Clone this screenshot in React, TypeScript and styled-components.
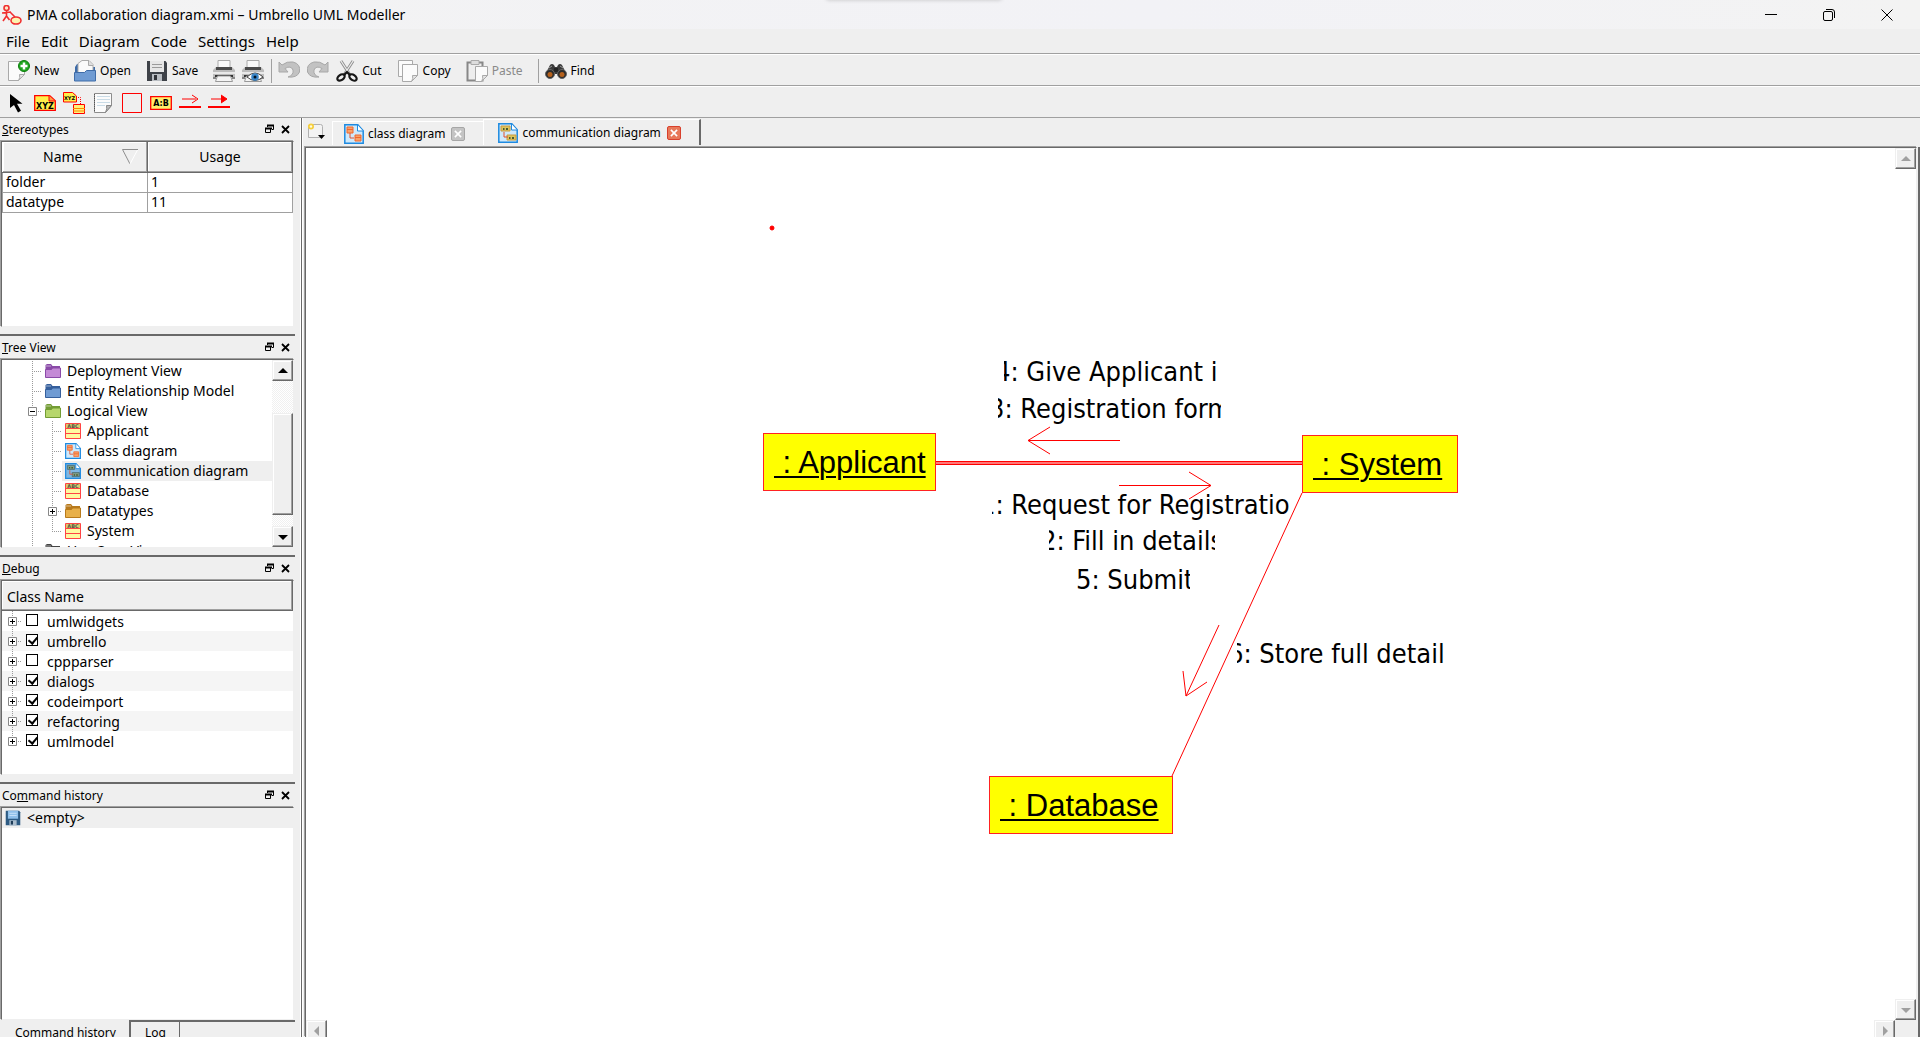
import React from 'react';
import styled, { createGlobalStyle } from 'styled-components';

const ui = '"Noto Sans", "Open Sans", sans-serif';
const diagramFont = '"DejaVu Sans Condensed", "Noto Sans", sans-serif';
const face = '#efefef';
const mid = '#a0a0a0';
const dark = '#696969';

const Global = createGlobalStyle`
  * { box-sizing: border-box; }
  html, body, #root { height: 100%; }
  body { margin: 0; background: ${face}; color: #000; font-family: ${ui}; font-size: 14px; overflow: hidden; }
  button { font: inherit; color: inherit; background: none; border: 0; padding: 0; margin: 0; }
  svg { display: block; flex: none; }
`;

const Window = styled.div`display: flex; flex-direction: column; height: 100%; background: ${face};`;

const TitleBar = styled.header`
  position: relative; display: flex; align-items: center; height: 29px; flex: none;
  padding: 0 4px 0 2px; background: linear-gradient(90deg, #f3f3f3, #f2f2f6 60%, #f3f3f3);
`;
const ShareBar = styled.div`
  position: absolute; top: -6px; left: 43%; width: 176px; height: 6px; border-radius: 4px;
  background: #fff; box-shadow: 0 0 4px #0003;
`;
const Title = styled.h1`flex: 1; margin: 0 0 0 5px; font-size: 14px; line-height: 20px; font-weight: 400;`;
const WindowButton = styled.button`
  width: 58px; height: 29px; display: flex; align-items: center; justify-content: center;
`;

const MenuBar = styled.nav`
  display: flex; align-items: center; height: 25px; flex: none; padding: 0 6px; gap: 11px;
  border-bottom: 1px solid ${mid};
`;
const MenuItem = styled.button`font-size: 15px; line-height: 22px;`;

const ToolBar = styled.div<{ $icons?: boolean }>`
  display: flex; align-items: center; height: 32px; flex: none; padding: 1px ${p => (p.$icons ? 5 : 8)}px 0;
  gap: ${p => (p.$icons ? 7 : 5)}px; border-top: 1px solid #fff; border-bottom: 1px solid ${mid};
`;
const ToolButton = styled.button<{ $wide?: boolean; $off?: boolean }>`
  display: flex; align-items: center; gap: 4px; height: 24px;
  margin-right: ${p => (p.$wide ? 10 : 2)}px;
  font-size: 12px; color: ${p => (p.$off ? '#8a8a8a' : '#000')};
`;
const ToolIcon = styled.button`width: 22px; height: 24px; display: flex; align-items: center; justify-content: center;`;
const Rule = styled.span`width: 1px; height: 24px; background: ${mid}; margin-right: 1px;`;

const Body = styled.div`display: flex; flex: 1; min-height: 0;`;
const Sidebar = styled.aside`width: 295px; flex: none; display: flex; flex-direction: column; min-height: 0;`;
const Splitter = styled.div`
  width: 9px; flex: none;
  background: linear-gradient(90deg, ${face} 5px, #fff 5px 6px, ${dark} 6px 7px, #fff 7px 8px, ${face} 8px);
`;

const Dock = styled.section<{ $h?: number }>`
  display: flex; flex-direction: column; flex: ${p => (p.$h ? `0 0 ${p.$h}px` : '1 1 0')}; min-height: 0;
`;
const DockTitle = styled.header`
  display: flex; align-items: center; gap: 6px; height: 22px; flex: none; padding: 0 4px 0 2px;
  h2 { flex: 1; margin: 0; font-size: 12px; line-height: 20px; font-weight: 400; padding-top: 1px; }
`;
const DockButton = styled.button`width: 10px; height: 12px;`;
const Frame = styled.div`
  flex: 1; min-height: 0; margin: 1px 1px 0; background: #fff; overflow: hidden; display: flex;
  border: 1px solid; border-color: ${dark} ${face} ${face} ${dark}; box-shadow: -1px -1px ${mid};
`;
const DockEdge = styled.div`
  height: 9px; flex: none; border-bottom: 2px solid ${dark};
`;

const Grid = styled.table`
  width: 100%; border-collapse: collapse; table-layout: fixed; align-self: flex-start; font-size: 14px;
  th { height: 30px; background: ${face}; font-weight: 400; padding: 0; border-right: 1px solid ${dark}; border-bottom: 1px solid ${dark}; box-shadow: inset -1px -1px ${mid}, inset 1px 1px #fff; }
  td { height: 20px; line-height: 18px; padding: 0 3px; border: 1px solid ${mid}; border-top: 0; }
`;
const SortHead = styled.span`display: flex; justify-content: center; gap: 40px; padding-left: 32px; align-items: center;`;

const TreeArea = styled.ul<{ $pad?: boolean }>`
  flex: 1; min-width: 0; margin: 0; padding: ${p => (p.$pad ? 1 : 0)}px 0 0; list-style: none; overflow: hidden;
`;
const TreeRow = styled.li<{ $shade?: string }>`
  display: flex; align-items: center; height: 20px; font-size: 14px; line-height: 20px; white-space: nowrap;
  background: ${p => p.$shade || 'transparent'};
`;
const TreeItem = styled.span<{ $on?: boolean }>`
  display: flex; align-items: center; flex: 1; gap: 6px; height: 20px; padding-left: 3px;
  background: ${p => (p.$on ? face : 'transparent')};
`;
const Indent = styled.span<{ $w: number }>`width: ${p => p.$w}px; flex: none;`;
const Check = styled.label`display: flex; align-items: center; gap: 9px; padding-left: 4px;`;
const CheckText = styled.span`padding-top: 2px;`;
const Box = styled.input`
  appearance: none; width: 12px; height: 12px; margin: 0 0 2px; border: 1px solid #000; background: #fff; position: relative;
  &:checked::after { content: ''; position: absolute; left: 3px; top: 0; width: 4px; height: 7px; border: solid #000; border-width: 0 2px 2px 0; transform: rotate(40deg); }
`;
const ListHead = styled.div`
  height: 30px; padding: 0 5px; line-height: 31px; background: ${face}; border-right: 1px solid ${dark}; border-bottom: 1px solid ${dark};
  box-shadow: inset -1px -1px ${mid}, inset 1px 1px #fff;
`;
const Column = styled.div`flex: 1; min-width: 0; display: flex; flex-direction: column;`;

const ScrollTrack = styled.div`
  width: 21px; flex: none; display: flex; flex-direction: column; align-items: stretch;
  background: repeating-conic-gradient(#fff 0 25%, #f0f0f0 0 50%) 0 0 / 2px 2px;
`;
const ScrollButton = styled.button`
  width: 21px; height: 21px; flex: none; display: flex; align-items: center; justify-content: center; background: ${face};
  border: solid; border-width: 1px; border-color: ${face} ${dark} ${dark} ${face};
  box-shadow: inset -1px -1px ${mid}, inset 1px 1px #fff;
`;
const Thumb = styled.div`
  height: 102px; background: ${face}; border: solid 1px; border-color: ${face} ${dark} ${dark} ${face};
  box-shadow: inset -1px -1px ${mid}, inset 1px 1px #fff;
`;
const Space = styled.div<{ $grow?: number }>`flex: ${p => p.$grow ?? 1};`;

const BottomTabs = styled.div`
  display: flex; height: 17px; flex: none; overflow: hidden; font-size: 12px; align-items: flex-start;
`;
const BottomTab = styled.button<{ $on?: boolean }>`
  height: 26px; flex: none; padding: ${p => (p.$on ? '3px 13px 0 15px' : '1px 13px 0 14px')}; line-height: 20px;
  display: flex; align-items: flex-start;
  border: solid; border-color: ${dark}; border-width: ${p => (p.$on ? '0' : '2px 1px 0 2px')};
`;
const BottomRest = styled.div`flex: 1; border-top: 2px solid ${dark};`;

const Main = styled.main`flex: 1; min-width: 0; display: flex; flex-direction: column;`;
const TabBar = styled.div`
  display: flex; align-items: flex-end; height: 27px; flex: none; padding-left: 3px; font-size: 12px;
`;
const NewTab = styled.button`width: 25px; height: 24px;`;
const Tab = styled.div<{ $on?: boolean }>`
  display: flex; align-items: center; gap: 4px; height: ${p => (p.$on ? 26 : 24)}px;
  padding: 0 18px 0 ${p => (p.$on ? 14 : 11)}px;
  border: solid #fff; border-width: 1px 0 0 1px;
  border-right: ${p => (p.$on ? `2px solid ${dark}` : '0')};
`;
const TabLabel = styled.button`display: flex; align-items: center; gap: 4px; white-space: nowrap;`;
const CloseTab = styled.button<{ $on?: boolean }>`
  width: 14px; height: 14px; margin-left: 2px; border-radius: 2px; display: flex; align-items: center; justify-content: center;
  background: ${p => (p.$on ? '#e8795a' : '#c4c4c4')}; border: 1px solid ${p => (p.$on ? '#d8402c' : '#a6a6a6')};
`;
const CanvasFrame = styled.div`
  flex: 1; min-height: 0; display: flex; margin: 2px 3px 0 1px; background: #fff;
  border: solid; border-width: 1px 1px 0; border-color: ${dark} ${face} ${face} ${dark};
  box-shadow: -1px -1px ${mid}, 1px 0 ${face}, 3px 0 ${dark};
`;
const View = styled.div`flex: 1; min-width: 0; display: flex; flex-direction: column;`;
const Canvas = styled.div`position: relative; flex: 1; overflow: hidden; min-height: 0;`;
const HScroll = styled.div`display: flex; justify-content: space-between; height: 17px; flex: none; overflow: hidden;`;
const VScroll = styled.div`display: flex; flex-direction: column; justify-content: space-between; width: 21px; flex: none;`;
const Corner = styled.div`height: 17px; background: ${face};`;
const Lines = styled.svg`position: absolute; left: 0; top: 0;`;
const Node = styled.div<{ $x: number; $y: number; $w: number }>`
  position: absolute; left: ${p => p.$x}px; top: ${p => p.$y}px; width: ${p => p.$w}px; height: 58px;
  padding: 11px 10px 0; background: #ff0; border: 1px solid #f22;
  font-family: "Liberation Sans", Arial, sans-serif; font-size: 31px; line-height: 36px; white-space: pre;
  text-decoration: underline; text-decoration-thickness: 2px; text-underline-offset: 3px;
`;
const Message = styled.div<{ $x: number; $y: number; $w: number; $shift: number }>`
  position: absolute; left: ${p => p.$x}px; top: ${p => p.$y}px; width: ${p => p.$w}px; height: 36px; overflow: hidden;
  font-family: ${diagramFont}; font-size: 27px; line-height: 36px; white-space: nowrap; text-indent: ${p => p.$shift}px;
`;

/* ---------- icons ---------- */
const Sheet = ({ x = 1, y = 2, w = 17, h = 19 }: { x?: number; y?: number; w?: number; h?: number }) => (
  <g stroke="#a9a9a9" fill="#fbfbfb">
    <path d={`M${x + .5} ${y + .5}h${w}v${h - 6}l-6 6h${6 - w}z`} />
    <path d={`M${x + w + .5} ${y + h - 5.5}h-5q1 3-1 6z`} fill="#e4e4e4" />
  </g>
);
const NewIcon = () => (
  <svg width="22" height="22" viewBox="0 0 22 22"><Sheet x={0} y={1} w={16} />
    <circle cx="16" cy="6" r="5.500" fill="#1ea51e" stroke="#0b7d0b" /><path d="M16 2.500v7M12.500 6h7" stroke="#fff" strokeWidth="2.500" /></svg>
);
const OpenIcon = () => (
  <svg width="22" height="22" viewBox="0 0 22 22">
    <path d="M1 20V7l2-3h5l2 3h11v13z" fill="#3c6ba8" /><path d="M4 13V3.500L8 .5h7l4 4V13z" fill="#fafafa" stroke="#aaa" /><path d="M14.500 1v4.500H19" fill="#ddd" stroke="#aaa" />
    <path d="M.5 12.500h10l2-2h9v10.500H.5z" fill="#6f9bd3" stroke="#3f6ca8" /></svg>
);
const SaveIcon = ({ size = 22, blue }: { size?: number; blue?: boolean }) => (
  <svg width={size} height={size} viewBox="0 0 22 22">
    <path d="M1 1h18.500l1.500 2v18H1z" fill={blue ? '#2d5b83' : '#3e4248'} />
    <path d="M4 1h14v11H4z" fill={blue ? '#8fc0ea' : '#e6e6e6'} /><path d="M6 4.500h10M6 7.500h10" stroke={blue ? '#dceeff' : '#9a9a9a'} />
    <path d="M6 14h10v7H6z" fill={blue ? '#a9bccd' : '#b9bdc2'} /><path d="M8 15h3v5H8z" fill={blue ? '#1d3c58' : '#303338'} /></svg>
);
const PrintIcon = ({ eye }: { eye?: boolean }) => (
  <svg width="22" height="22" viewBox="0 0 22 22">
    <path d="M5 .5h12V8H5z" fill="#fafafa" stroke="#aaa" /><path d="M3 7h16l3 3v7H0v-7z" fill="#bcbcbc" /><path d="M3 7h16v3H3z" fill="#4c4c4c" />
    <path d="M0 12h22v2H0z" fill="#e9e9e9" /><path d="M2 15h18v2H2z" fill="#333" /><path d="M4.500 16h13l2 5.500h-17z" fill="#f4f4f4" stroke="#999" /><path d="M0 17h3v2H0zM19 17h3v2h-3z" fill="#888" />
    {eye && <><path d="M5 17q8-8 16 0q-8 7-16 0z" fill="#fff" stroke="#444" /><circle cx="13" cy="17" r="3.800" fill="#3a86c8" /><circle cx="13" cy="17" r="1.500" fill="#012" /></>}
  </svg>
);
const UndoIcon = ({ flip }: { flip?: boolean }) => (
  <svg width="22" height="22" viewBox="0 0 22 22"><g transform={flip ? 'translate(22 0) scale(-1 1)' : undefined}>
    <path d="M1 2v10h9L7 8.500q6-3.500 8 1.500q1 5-5 7q9 1 11.500-5Q23 4 15 2Q9 1 4 5z" fill="#c2c2c2" stroke="#a8a8a8" strokeLinejoin="round" /></g></svg>
);
const CutIcon = () => (
  <svg width="22" height="22" viewBox="0 0 22 22">
    <path d="M5 1l9 14M17 1L8 15" stroke="#8e8e8e" strokeWidth="3" /><path d="M5 1l8.500 13M17 1L8.500 14" stroke="#eee" strokeWidth="1.200" />
    <g fill="none" stroke="#161616" strokeWidth="2.200"><ellipse cx="5" cy="17.500" rx="4" ry="2.600" transform="rotate(-35 5 17.500)" /><ellipse cx="17" cy="17.500" rx="4" ry="2.600" transform="rotate(35 17 17.500)" /><path d="M8 15l3-3 3 3" /></g></svg>
);
const CopyIcon = () => (
  <svg width="22" height="22" viewBox="0 0 22 22"><Sheet x={1} y={0} w={14} h={16} /><Sheet x={5} y={4} w={15} h={17} /></svg>
);
const PasteIcon = () => (
  <svg width="22" height="22" viewBox="0 0 22 22">
    <path d="M1.500 2.500h15v18h-15z" fill="#eee" stroke="#888" strokeWidth="2" /><path d="M5 .5h8v4H5z" fill="#ddd" stroke="#aaa" /><Sheet x={9} y={6} w={12} h={15} /></svg>
);
const FindIcon = () => (
  <svg width="22" height="22" viewBox="0 0 22 22">
    <path d="M5 5q2-2 4 0l1 2h2l1-2q2-2 4 0l4.500 9H.5z" fill="#3a3a3a" />
    <path d="M4 8l3-2M18 8l-3-2" stroke="#999" /><path d="M9 8h4v4H9z" fill="#222" />
    <circle cx="5" cy="14" r="4.500" fill="#2b2b2b" stroke="#666" /><circle cx="17" cy="14" r="4.500" fill="#2b2b2b" stroke="#666" />
    <circle cx="5" cy="14.500" r="2.500" fill="#b5611c" /><circle cx="17" cy="14.500" r="2.500" fill="#b5611c" /></svg>
);
const AppIcon = () => (
  <svg width="20" height="20" viewBox="0 0 20 20" fill="none" stroke="#f03030" strokeWidth="1.600">
    <circle cx="4.500" cy="3" r="2.500" fill="#fde9c8" /><path d="M4.500 5.500v6M0 8l9-1M4.500 11L1 16M4.500 11l3 4M8 7l5 5" /><ellipse cx="14" cy="15.500" rx="5" ry="3.500" fill="#fdf3b0" /></svg>
);
const PointerIcon = () => (
  <svg width="22" height="22" viewBox="0 0 22 22"><path d="M5 2v14l4-3 4 7.500 3-1.700-4-7h5.500z" fill="#000" /></svg>
);
const svgLabel = { fontFamily: '"DejaVu Sans"', fontWeight: 700 } as const;
const ObjectIcon = () => (
  <svg width="22" height="22" viewBox="0 0 22 22"><path d="M.7 3.700h15l5.600 5v9.600H.7z" fill="#ffef4a" stroke="red" strokeWidth="1.300" /><path d="M15 3.500V9h6" fill="#f94" stroke="red" />
    <text x="11" y="17" fontSize="8" textAnchor="middle" {...svgLabel}>XYZ</text></svg>
);
const SubObjectIcon = () => (
  <svg width="22" height="22" viewBox="0 0 22 22"><path d="M.5.5h9l4 3.500v6H.5z" fill="#ffef4a" stroke="red" /><text x="6.500" y="8" fontSize="5" textAnchor="middle" {...svgLabel}>XYZ</text>
    <path d="M13 5.500h4.500V12" fill="none" stroke="red" strokeDasharray="1 1" /><path d="M10.500 12.500h11v9h-11z" fill="#fff27a" stroke="red" /><path d="M10 16.500h12M10 19h12" stroke="#f80" /></svg>
);
const NoteIcon = () => (
  <svg width="22" height="22" viewBox="0 0 22 22"><path d="M2.500 1.500h17v12l-6 7h-11z" fill="#fbfbfb" stroke="#8d8d8d" /><path d="M19.500 13.500h-5q1 3-1 7z" fill="#bbb" stroke="#888" />
    <path d="M5 4.500h13M5 7.500h13M5 10.500h13M5 13.500h8" stroke="#c9dbe6" /><path d="M2.500 2v18" stroke="#555" strokeDasharray="1 1" /></svg>
);
const BoxIcon = () => <svg width="22" height="22" viewBox="0 0 22 22"><path d="M1.500 1.500h19v19h-19z" fill="none" stroke="red" /></svg>;
const AssocIcon = () => (
  <svg width="22" height="22" viewBox="0 0 22 22"><path d="M.7 4.700h20.600v12.600H.7z" fill="#ffef6a" stroke="red" strokeWidth="1.300" />
    <text x="11" y="14" fontSize="8" textAnchor="middle" {...svgLabel}>A:B</text></svg>
);
const ArrowIcon = ({ solid }: { solid?: boolean }) => (
  <svg width="22" height="22" viewBox="0 0 22 22"><path d="M0 15h22" stroke="red" strokeWidth="2" /><path d="M3 7h14" stroke="red" />
    <path d="M13 3l6 4-6 4" fill={solid ? 'red' : 'none'} stroke="red" /></svg>
);
const FolderIcon = ({ c, d }: { c: string; d: string }) => (
  <svg width="16" height="16" viewBox="0 0 16 16"><path d="M.5 14V2L2 1h4l1.500 2H15v11z" fill={d} /><path d="M1 3h5" stroke="#fff8" /><path d="M.5 14.500V6.500h6l1-1.500h8v9.500z" fill={c} stroke={d} /></svg>
);
const ClassIcon = () => (
  <svg width="16" height="16" viewBox="0 0 16 16"><path d="M.5.5h15v15H.5z" fill="#fff9a0" stroke="#f44" /><path d="M1 1h14v4H1z" fill="#d8cc70" />
    <text x="8" y="5" fontSize="5" textAnchor="middle" fill="#554" {...svgLabel}>ABC</text>
    <path d="M0 5.500h16M0 10.500h16" stroke="#f44" /></svg>
);
const DiagramIcon = ({ size = 16, kind = 'class' }: { size?: number; kind?: 'class' | 'comm' | 'dim' }) => {
  const c = kind === 'class' ? '#f7a26a' : kind === 'comm' ? '#dcc45c' : '#7f9c86';
  const s = kind === 'class' ? '#f2672c' : kind === 'comm' ? '#c89a40' : '#4a6a70';
  return (
    <svg width={size} height={size} viewBox="0 0 20 20">
      <path d="M.8.8h13l5.400 6v12.400H.8z" fill={kind === 'dim' ? '#7fb6e0' : '#cfe9fb'} stroke="#1e8ae0" strokeWidth="1.500" /><path d="M13.500 1v6H19" fill="#fff" stroke="#1e8ae0" />
      {kind === 'class'
        ? <><path d="M3 3h6v6H3zM11 11h6v6h-6z" fill={c} stroke={s} /><path d="M3 5.500h6M11 13.500h6" stroke={s} /></>
        : <><path d="M3 3h9v5H3zM9 12h9v5H9z" fill={c} stroke={s} /><path d="M5 6h1.500M8 6h2M11 15h1.500M14 15h2" stroke="#4a5a30" strokeWidth="2" /></>}
      <path d="M6 9v5h4" fill="none" stroke="#e2502c" /></svg>
  );
};
const NewTabIcon = () => (
  <svg width="20" height="22" viewBox="0 0 20 22"><path d="M1.500 4.500q0-2 2-2h10q2 0 2 2v11h-14z" fill="#f3f3f3" stroke="#b0b0b0" /><circle cx="4" cy="4.500" r="3" fill="#f6cf3c" /><circle cx="4" cy="4.500" r="1.200" fill="#fffbe0" /><path d="M11 13h7l-3.500 4z" /></svg>
);
const Cross = ({ c = '#000', s = 9 }: { c?: string; s?: number }) => (
  <svg width={s} height={s} viewBox="0 0 9 9"><path d="M1 1l7 7M8 1L1 8" stroke={c} strokeWidth="1.800" /></svg>
);
const FloatIcon = () => (
  <svg width="9" height="10" viewBox="0 0 9 10" fill="none" stroke="#000"><path d="M2.500 3V1.500h6v4H7" /><path d="M2 1.500h7M0 4.500h7" strokeWidth="2" /><path d="M.5 4.500h5v4h-5z" /></svg>
);
const Tri = ({ dir, c = '#000' }: { dir: 'up' | 'down' | 'left' | 'right'; c?: string }) => {
  const d = { up: 'M0 7h10L5 2z', down: 'M0 3h10L5 8z', left: 'M7 0v10L2 5z', right: 'M3 0v10l5-5z' }[dir];
  return <svg width="10" height="10" viewBox="0 0 10 10"><path d={d} fill={c} /></svg>;
};
const Branch = ({ end, sign, pass }: { end?: boolean; sign?: '+' | '-'; pass?: boolean }) => (
  <svg width="20" height="20" viewBox="0 0 20 20" fill="none" stroke="#9a9a9a">
    <path d={`M10.500 0V${end ? 11 : 20}`} strokeDasharray="1 1" />
    {!pass && <path d="M10 10.500h10" strokeDasharray="1 1" />}
    {sign && <><path d="M6.500 6.500h8v8h-8z" fill="#fff" stroke="#888" /><path d={sign === '+' ? 'M8 10.500h5M10.500 8v5' : 'M8 10.500h5'} stroke="#000" /></>}
  </svg>
);

/* ---------- parts ---------- */
const DockHead = ({ pre = '', mark, post }: { pre?: string; mark: string; post: string }) => (
  <DockTitle>
    <h2>{pre}<u>{mark}</u>{post}</h2>
    <DockButton aria-label="Float"><FloatIcon /></DockButton>
    <DockButton aria-label="Close"><Cross /></DockButton>
  </DockTitle>
);

const classes = [
  { name: 'Applicant', icon: <ClassIcon /> },
  { name: 'class diagram', icon: <DiagramIcon /> },
  { name: 'communication diagram', icon: <DiagramIcon kind="dim" />, on: true },
  { name: 'Database', icon: <ClassIcon /> },
  { name: 'Datatypes', icon: <FolderIcon c="#e8b04a" d="#b87a1c" />, sign: '+' as const },
  { name: 'System', icon: <ClassIcon />, end: true },
];
const debug = [['umlwidgets', false], ['umbrello', true], ['cppparser', false], ['dialogs', true], ['codeimport', true], ['refactoring', true], ['umlmodel', true]] as [string, boolean][];
const messages = [
  { t: '4: Give Applicant id', x: 698, y: 206, w: 213, s: -9 },
  { t: '3: Registration form', x: 692, y: 243, w: 223, s: -9 },
  { t: '1: Request for Registration', x: 686, y: 339, w: 298, s: -12 },
  { t: '2: Fill in details', x: 743, y: 375, w: 166, s: -8 },
  { t: '5: Submit', x: 771, y: 414, w: 113, s: -1 },
  { t: '6: Store full details', x: 931, y: 488, w: 207, s: -9 },
];

export default function App() {
  return (
    <Window>
      <Global />
      <TitleBar>
        <AppIcon />
        <Title>PMA collaboration diagram.xmi – Umbrello UML Modeller</Title>
        <ShareBar />
        <WindowButton aria-label="Minimize"><svg width="12" height="12"><path d="M0 5.500h12" stroke="#000" /></svg></WindowButton>
        <WindowButton aria-label="Restore"><svg width="12" height="12" fill="none" stroke="#000"><rect x=".5" y="2.500" width="9" height="9" rx="1.500" /><path d="M3 .5h6q2.500 0 2.500 2.500v6" /></svg></WindowButton>
        <WindowButton aria-label="Close"><svg width="12" height="12"><path d="M.5.5l11 11M11.500.5l-11 11" stroke="#000" /></svg></WindowButton>
      </TitleBar>
      <MenuBar>
        {['File', 'Edit', 'Diagram', 'Code', 'Settings', 'Help'].map(m => <MenuItem key={m}>{m}</MenuItem>)}
      </MenuBar>
      <ToolBar>
        <ToolButton $wide><NewIcon />New</ToolButton>
        <ToolButton $wide><OpenIcon />Open</ToolButton>
        <ToolButton $wide><SaveIcon />Save</ToolButton>
        <ToolButton aria-label="Print"><PrintIcon /></ToolButton>
        <ToolButton aria-label="Print preview"><PrintIcon eye /></ToolButton>
        <Rule />
        <ToolButton aria-label="Undo"><UndoIcon /></ToolButton>
        <ToolButton aria-label="Redo"><UndoIcon flip /></ToolButton>
        <ToolButton $wide><CutIcon />Cut</ToolButton>
        <ToolButton $wide><CopyIcon />Copy</ToolButton>
        <ToolButton $wide $off><PasteIcon />Paste</ToolButton>
        <Rule />
        <ToolButton $wide><FindIcon />Find</ToolButton>
      </ToolBar>
      <ToolBar $icons>
        <ToolIcon aria-label="Select"><PointerIcon /></ToolIcon>
        <ToolIcon aria-label="Object"><ObjectIcon /></ToolIcon>
        <ToolIcon aria-label="Sub-object"><SubObjectIcon /></ToolIcon>
        <ToolIcon aria-label="Note"><NoteIcon /></ToolIcon>
        <ToolIcon aria-label="Box"><BoxIcon /></ToolIcon>
        <ToolIcon aria-label="Association"><AssocIcon /></ToolIcon>
        <ToolIcon aria-label="Asynchronous message"><ArrowIcon /></ToolIcon>
        <ToolIcon aria-label="Synchronous message"><ArrowIcon solid /></ToolIcon>
      </ToolBar>
      <Body>
        <Sidebar>
          <Dock $h={218}>
            <DockHead mark="S" post="tereotypes" />
            <Frame>
              <Grid>
                <thead><tr><th><SortHead>Name<svg width="16" height="16" fill="none"><path d="M16 .5H.5L8 15" stroke="#8d8d8d" /><path d="M8 15l7.500-14" stroke="#fff" /></svg></SortHead></th><th>Usage</th></tr></thead>
                <tbody><tr><td>folder</td><td>1</td></tr><tr><td>datatype</td><td>11</td></tr></tbody>
              </Grid>
            </Frame>
            <DockEdge />
          </Dock>
          <Dock $h={221}>
            <DockHead mark="T" post="ree View" />
            <Frame>
              <TreeArea $pad>
                <TreeRow><Indent $w={20} /><Branch /><TreeItem><FolderIcon c="#c48ad6" d="#8a4aa8" />Deployment View</TreeItem></TreeRow>
                <TreeRow><Indent $w={20} /><Branch /><TreeItem><FolderIcon c="#6f9bd3" d="#355f9c" />Entity Relationship Model</TreeItem></TreeRow>
                <TreeRow><Indent $w={20} /><Branch sign="-" /><TreeItem><FolderIcon c="#b6d66c" d="#739c34" />Logical View</TreeItem></TreeRow>
                {classes.map(c => (
                  <TreeRow key={c.name}><Indent $w={20} /><Branch pass /><Branch end={c.end} sign={c.sign} /><TreeItem $on={c.on}>{c.icon}{c.name}</TreeItem></TreeRow>
                ))}
                <TreeRow><Indent $w={20} /><Branch /><TreeItem><FolderIcon c="#8c8c8c" d="#444" />Use Case View</TreeItem></TreeRow>
              </TreeArea>
              <ScrollTrack>
                <ScrollButton aria-label="Scroll up"><Tri dir="up" /></ScrollButton>
                <Space $grow={3} /><Thumb /><Space $grow={1} />
                <ScrollButton aria-label="Scroll down"><Tri dir="down" /></ScrollButton>
              </ScrollTrack>
            </Frame>
            <DockEdge />
          </Dock>
          <Dock $h={227}>
            <DockHead mark="D" post="ebug" />
            <Frame>
              <Column>
                <ListHead>Class Name</ListHead>
                <TreeArea>
                  {debug.map(([name, on], i) => (
                    <TreeRow key={name} $shade={i % 2 ? '#f5f5f5' : undefined}>
                      <Branch sign="+" end={i === debug.length - 1} />
                      <Check><Box type="checkbox" defaultChecked={on} /><CheckText>{name}</CheckText></Check>
                    </TreeRow>
                  ))}
                </TreeArea>
              </Column>
            </Frame>
            <DockEdge />
          </Dock>
          <Dock>
            <DockHead pre="Co" mark="m" post="mand history" />
            <Frame>
              <TreeArea>
                <TreeRow $shade={face}><TreeItem><SaveIcon size={16} blue />&lt;empty&gt;</TreeItem></TreeRow>
              </TreeArea>
            </Frame>
            <BottomTabs>
              <BottomTab $on>Command history</BottomTab>
              <BottomTab>Log</BottomTab>
              <BottomRest />
            </BottomTabs>
          </Dock>
        </Sidebar>
        <Splitter />
        <Main>
          <TabBar>
            <NewTab aria-label="New diagram"><NewTabIcon /></NewTab>
            <Tab>
              <TabLabel><DiagramIcon size={20} />class diagram</TabLabel>
              <CloseTab aria-label="Close class diagram"><Cross c="#fff" s={8} /></CloseTab>
            </Tab>
            <Tab $on>
              <TabLabel><DiagramIcon size={20} kind="comm" />communication diagram</TabLabel>
              <CloseTab $on aria-label="Close communication diagram"><Cross c="#fff" s={8} /></CloseTab>
            </Tab>
          </TabBar>
          <CanvasFrame>
            <View>
              <Canvas>
                <Lines width="1200" height="720" fill="none" stroke="red">
                  <path d="M630 313.500h366M630 316.500h366" /><path d="M630 315h366" stroke="#f77" strokeWidth="2" />
                  <path d="M814 292.500h-92M744 279l-22 13.500 22 13.500M813 337.500h92M883 324l22 13.500-22 13.500" />
                  <path d="M996 345L866 628M913 477l-33 71-3-25M880 548l21-14" />
                  <circle cx="466" cy="80" r="2" fill="red" />
                </Lines>
                <Node $x={457} $y={285} $w={173}> : Applicant</Node>
                <Node $x={996} $y={287} $w={156}> : System</Node>
                <Node $x={683} $y={628} $w={184}> : Database</Node>
                {messages.map(m => <Message key={m.t} $x={m.x} $y={m.y} $w={m.w} $shift={m.s}>{m.t}</Message>)}
              </Canvas>
              <HScroll>
                <ScrollButton aria-label="Scroll left"><Tri dir="left" c={mid} /></ScrollButton>
                <ScrollButton aria-label="Scroll right"><Tri dir="right" c={mid} /></ScrollButton>
              </HScroll>
            </View>
            <VScroll>
              <ScrollButton aria-label="Scroll canvas up"><Tri dir="up" c={mid} /></ScrollButton>
              <Space />
              <ScrollButton aria-label="Scroll canvas down"><Tri dir="down" c={mid} /></ScrollButton>
              <Corner />
            </VScroll>
          </CanvasFrame>
        </Main>
      </Body>
    </Window>
  );
}
